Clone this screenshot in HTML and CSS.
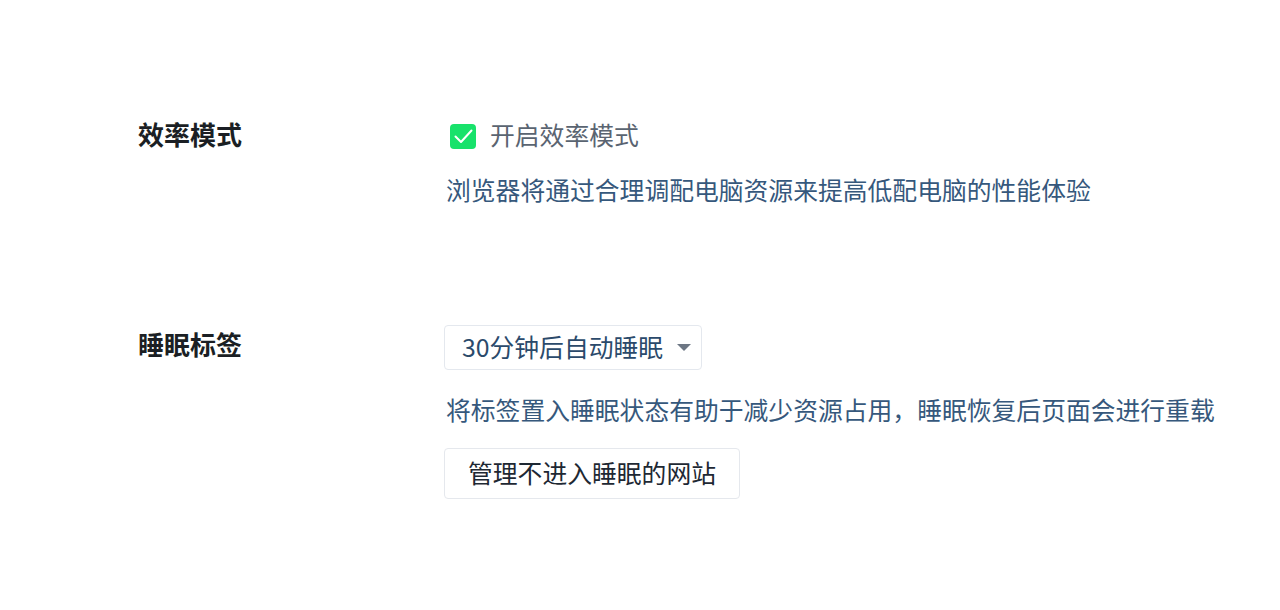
FILE: index.html
```html
<!DOCTYPE html>
<html lang="zh-CN">
<head>
<meta charset="utf-8">
<link rel="stylesheet" href="styles.css">
</head>
<body>
<div class="page">
  <section class="setting first">
    <div class="label">效率模式</div>
    <div class="content">
      <label class="check-line">
        <span class="checkbox">
          <svg viewBox="0 0 26 25" width="26" height="25"><path d="M5.5 12.5 L11 18 L21.5 6.5" fill="none" stroke="#ffffff" stroke-width="2" stroke-linecap="round" stroke-linejoin="round"/></svg>
        </span>
        <span class="check-text">开启效率模式</span>
      </label>
      <p class="desc desc-first">浏览器将通过合理调配电脑资源来提高低配电脑的性能体验</p>
    </div>
  </section>
  <section class="setting second">
    <div class="label label-second">睡眠标签</div>
    <div class="content">
      <div class="select">
        <span class="select-text">30分钟后自动睡眠</span>
        <span class="arrow"></span>
      </div>
      <p class="desc desc-second">将标签置入睡眠状态有助于减少资源占用，睡眠恢复后页面会进行重载</p>
      <button class="btn">管理不进入睡眠的网站</button>
    </div>
  </section>
</div>
</body>
</html>
```

FILE: styles.css
```css
html, body {
  margin: 0;
  padding: 0;
  background: #ffffff;
}
body {
  font-family: "Noto Sans CJK SC", "Noto Sans", sans-serif;
  font-size: 24.8px;
  width: 1280px;
  height: 610px;
  overflow: hidden;
}
.page {
  padding-top: 117px;
  padding-left: 138px;
}
.setting {
  display: grid;
  grid-template-columns: 306px 1fr;
}
.second {
  margin-top: 119px;
}
.label {
  font-weight: 700;
  color: #1b1f24;
  line-height: 34px;
  font-size: 26px;
}
.label-second {
  margin-top: 2px;
}
.content {
  display: flex;
  flex-direction: column;
  align-items: flex-start;
}
.check-line {
  display: flex;
  align-items: center;
  height: 34px;
  margin-left: 6px;
}
.checkbox {
  width: 26px;
  height: 25px;
  border-radius: 4px;
  background: #18e26b;
  display: flex;
  margin-top: 4px;
}
.check-text {
  margin-left: 14px;
  color: #5a6471;
  line-height: 34px;
}
.desc {
  margin: 0;
  line-height: 34px;
  color: #36587c;
  margin-left: 2px;
}
.desc-first {
  margin-top: 21px;
}
.select {
  box-sizing: border-box;
  width: 258px;
  height: 45px;
  border: 1px solid #e4e8ee;
  border-radius: 4px;
  display: flex;
  align-items: center;
  padding-left: 17px;
  padding-bottom: 3px;
}
.select-text {
  color: #2b4a6b;
  line-height: 34px;
}
.arrow {
  margin-left: 14px;
  margin-top: 3px;
  width: 0;
  height: 0;
  border-left: 7px solid transparent;
  border-right: 7px solid transparent;
  border-top: 7px solid #6d7784;
}
.desc-second {
  margin-top: 22px;
}
.btn {
  margin-top: 22px;
  box-sizing: border-box;
  width: 296px;
  height: 51px;
  border: 1px solid #e5e8ed;
  border-radius: 4px;
  background: #ffffff;
  font-family: inherit;
  font-size: 24.8px;
  color: #1e2833;
  padding: 0 0 3px 0;
}
```
